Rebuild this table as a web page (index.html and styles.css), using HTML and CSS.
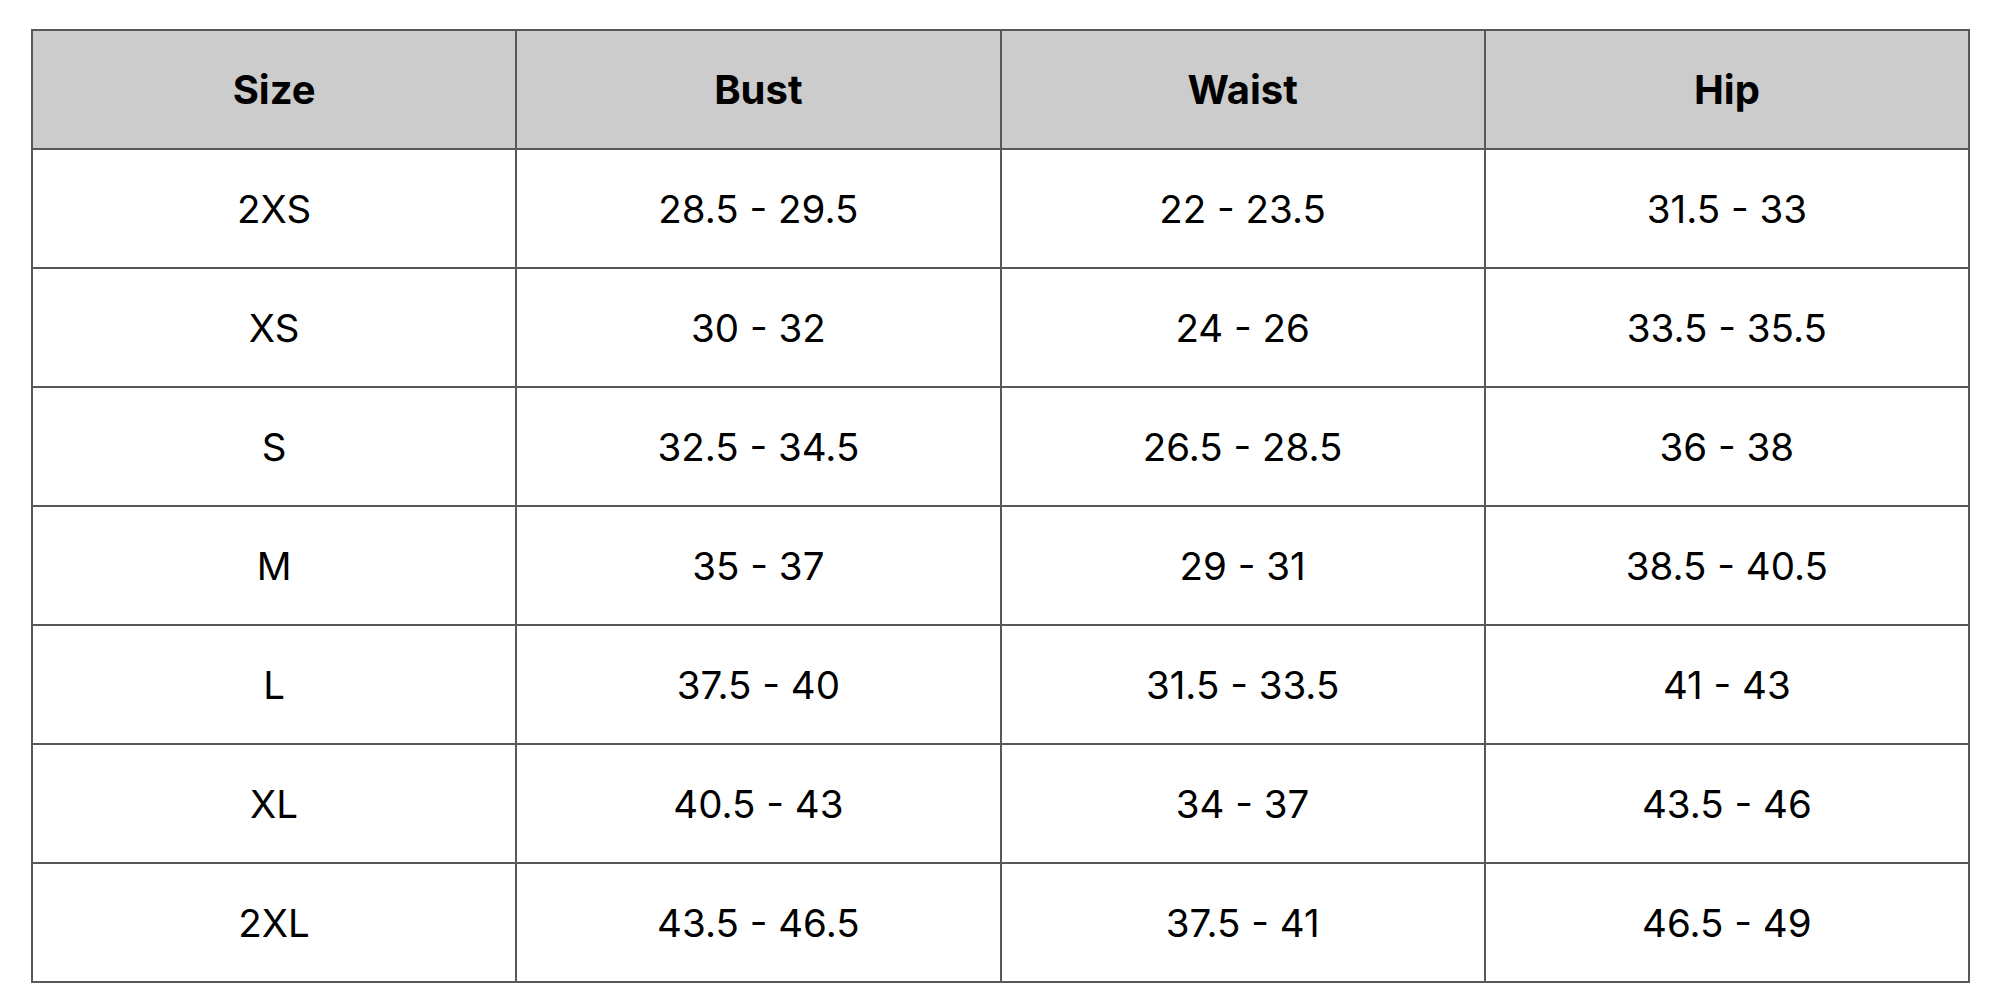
FILE: index.html
```html
<!DOCTYPE html>
<html>
<head>
<meta charset="utf-8">
<link rel="stylesheet" href="styles.css">
</head>
<body>
<div class="page">
<table class="chart">
<thead>
<tr><th>Size</th><th>Bust</th><th>Waist</th><th>Hip</th></tr>
</thead>
<tbody>
<tr><td>2XS</td><td>28.5 - 29.5</td><td>22 - 23.5</td><td>31.5 - 33</td></tr>
<tr><td>XS</td><td>30 - 32</td><td>24 - 26</td><td>33.5 - 35.5</td></tr>
<tr><td>S</td><td>32.5 - 34.5</td><td>26.5 - 28.5</td><td>36 - 38</td></tr>
<tr><td>M</td><td>35 - 37</td><td>29 - 31</td><td>38.5 - 40.5</td></tr>
<tr><td>L</td><td>37.5 - 40</td><td>31.5 - 33.5</td><td>41 - 43</td></tr>
<tr><td>XL</td><td>40.5 - 43</td><td>34 - 37</td><td>43.5 - 46</td></tr>
<tr><td>2XL</td><td>43.5 - 46.5</td><td>37.5 - 41</td><td>46.5 - 49</td></tr>
</tbody>
</table>
</div>
</body>
</html>
```
FILE: styles.css
```css
html, body {
  margin: 0;
  padding: 0;
  background: #ffffff;
}
.page {
  padding: 29px 0 0 31px;
}
.chart {
  border-collapse: collapse;
  width: 1939px;
  table-layout: fixed;
  font-family: Inter, "Liberation Sans", sans-serif;
  color: #000;
}
.chart th, .chart td {
  border: 2px solid #585858;
  height: 119px;
  padding: 0;
  text-align: center;
  vertical-align: middle;
  box-sizing: border-box;
}
.chart th {
  background: #cccccc;
  font-weight: 700;
  font-size: 40px;
}
.chart td {
  font-weight: 400;
  font-size: 38.5px;
}
```
